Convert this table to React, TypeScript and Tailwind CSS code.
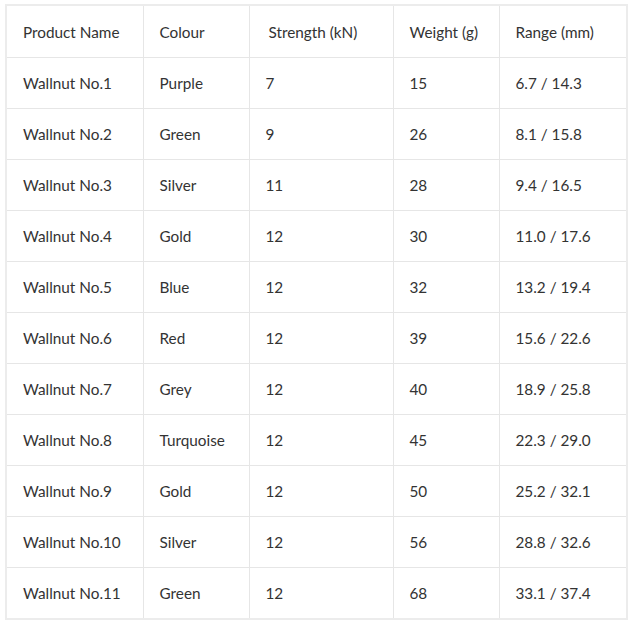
import React from "react";

const rows: [string, string, string, string, string][] = [
  ["Wallnut No.1", "Purple", "7", "15", "6.7 / 14.3"],
  ["Wallnut No.2", "Green", "9", "26", "8.1 / 15.8"],
  ["Wallnut No.3", "Silver", "11", "28", "9.4 / 16.5"],
  ["Wallnut No.4", "Gold", "12", "30", "11.0 / 17.6"],
  ["Wallnut No.5", "Blue", "12", "32", "13.2 / 19.4"],
  ["Wallnut No.6", "Red", "12", "39", "15.6 / 22.6"],
  ["Wallnut No.7", "Grey", "12", "40", "18.9 / 25.8"],
  ["Wallnut No.8", "Turquoise", "12", "45", "22.3 / 29.0"],
  ["Wallnut No.9", "Gold", "12", "50", "25.2 / 32.1"],
  ["Wallnut No.10", "Silver", "12", "56", "28.8 / 32.6"],
  ["Wallnut No.11", "Green", "12", "68", "33.1 / 37.4"],
];

const headers = ["Product Name", "Colour", "Strength (kN)", "Weight (g)", "Range (mm)"];
const widths = ["w-[136px]", "w-[106px]", "w-[144px]", "w-[106px]", "w-[127px]"];

export default function App() {
  return (
    <div className="w-[632px] h-[628px] bg-white pt-[4px] pl-[5px]" style={{ fontFamily: "Lato, 'Noto Sans', sans-serif" }}>
      <div className="w-[623px] border-2 border-[#ececec]">
        <table className="border-collapse table-fixed text-[15.3px] text-[#333333]">
          <thead>
            <tr className="h-[51px]">
              {headers.map((h, i) => (
                <th
                  key={h}
                  className={`${widths[i]} ${i === 2 ? "pl-[19px]" : "pl-[16px]"} pt-[2px] font-normal text-left border-[#e6e6e6] ${i > 0 ? "border-l" : ""}`}
                >
                  {h}
                </th>
              ))}
            </tr>
          </thead>
          <tbody>
            {rows.map((r) => (
              <tr key={r[0]} className="h-[51px] border-t border-[#e6e6e6]">
                {r.map((c, i) => (
                  <td
                    key={i}
                    className={`pl-[16px] pt-[2px] text-left border-[#e6e6e6] ${i > 0 ? "border-l" : ""}`}
                  >
                    {c}
                  </td>
                ))}
              </tr>
            ))}
          </tbody>
        </table>
      </div>
    </div>
  );
}
